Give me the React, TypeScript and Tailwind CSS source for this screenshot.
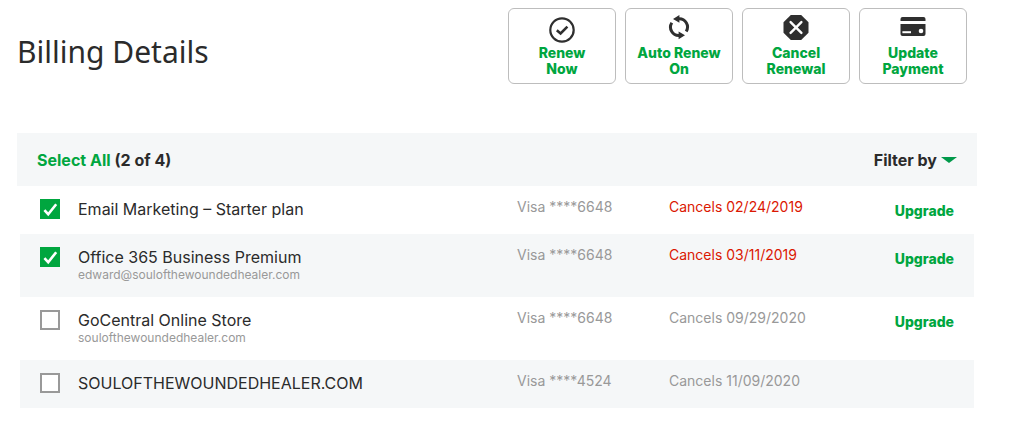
import { useState } from "react";

type Product = {
  id: string;
  name: string;
  detail?: string;
  card: string;
  date: string;
  expiring: boolean;
  upgrade: boolean;
};

const products: Product[] = [
  {
    id: "email",
    name: "Email Marketing – Starter plan",
    card: "Visa ****6648",
    date: "Cancels 02/24/2019",
    expiring: true,
    upgrade: true,
  },
  {
    id: "office",
    name: "Office 365 Business Premium",
    detail: "edward@soulofthewoundedhealer.com",
    card: "Visa ****6648",
    date: "Cancels 03/11/2019",
    expiring: true,
    upgrade: true,
  },
  {
    id: "store",
    name: "GoCentral Online Store",
    detail: "soulofthewoundedhealer.com",
    card: "Visa ****6648",
    date: "Cancels 09/29/2020",
    expiring: false,
    upgrade: true,
  },
  {
    id: "domain",
    name: "SOULOFTHEWOUNDEDHEALER.COM",
    card: "Visa ****4524",
    date: "Cancels 11/09/2020",
    expiring: false,
    upgrade: false,
  },
];

const RenewIcon = () => (
  <svg viewBox="0 0 28 28" className="size-7" fill="none" stroke="#2f2f2f" aria-hidden="true">
    <circle cx="14" cy="15" r="11.7" strokeWidth="2.2" />
    <path d="M8.8 15.2l3.8 3.2 6.8-6.8" strokeWidth="2.6" />
  </svg>
);

const AutoRenewIcon = () => (
  <svg viewBox="0 0 28 28" className="size-7" fill="none" stroke="#2f2f2f" aria-hidden="true">
    <path d="M13.5 3.8A8.3 8.3 0 0 1 21.2 16.5M14.5 20.4A8.3 8.3 0 0 1 6.8 7.7" strokeWidth="3" />
    <path d="M14.4 0v7.8L8 3.9zM13.6 24.2v-7.8l6.4 3.9z" fill="#2f2f2f" stroke="none" />
  </svg>
);

const CancelIcon = () => (
  <svg viewBox="0 0 28 28" className="size-7" fill="none" aria-hidden="true">
    <path d="M8.8 0h10.4l7.3 7.3v10.4L19.2 25H8.8L1.5 17.7V7.3z" fill="#2f2f2f" />
    <path d="M8.6 7.1l10.8 10.8M19.4 7.1L8.6 17.9" stroke="#fff" strokeWidth="2.4" strokeLinecap="round" />
  </svg>
);

const PaymentIcon = () => (
  <svg viewBox="0 0 28 28" className="size-7" fill="#2f2f2f" aria-hidden="true">
    <path d="M1.5 6V4a2 2 0 0 1 2-2h21a2 2 0 0 1 2 2v2z" />
    <path d="M1.5 9h25v10a2 2 0 0 1-2 2h-21a2 2 0 0 1-2-2z" />
    <path d="M3.4 16.2h8.6v2H3.4z" fill="#fff" />
    <circle cx="22" cy="16" r="2.3" fill="#fff" />
  </svg>
);

const actions = [
  { first: "Renew", second: "Now", icon: <RenewIcon /> },
  { first: "Auto Renew", second: "On", icon: <AutoRenewIcon /> },
  { first: "Cancel", second: "Renewal", icon: <CancelIcon /> },
  { first: "Update", second: "Payment", icon: <PaymentIcon /> },
];

const App = () => {
  const [selected, setSelected] = useState<string[]>(["email", "office"]);

  const toggle = (id: string) => {
    setSelected(
      selected.includes(id) ? selected.filter((item) => item !== id) : [...selected, id]
    );
  };

  return (
    <main className="bg-white pt-2 pr-[38px] pb-5 pl-[17px] font-['Inter',sans-serif] text-[#2b2b2b]">
      <header className="flex items-start justify-between pr-2.5">
        <h1 className="pt-6 font-['Noto_Sans',sans-serif] text-[30px] leading-10">Billing Details</h1>
        <div className="flex gap-[9px]">
          {actions.map((action) => (
            <button
              key={action.first}
              type="button"
              className="flex h-19 w-[108px] flex-col items-center rounded-md border border-[#bdbdbd] pt-1.5 text-[14px] leading-4 font-extrabold text-[#00a63f]"
            >
              {action.icon}
              <span className="pt-0.5">{action.first}</span>
              <span>{action.second}</span>
            </button>
          ))}
        </div>
      </header>

      <section className="pt-[49px]">
        <div className="flex h-[53px] items-center justify-between bg-[#f5f7f8] px-5">
          <div className="flex gap-1 text-base leading-5 font-bold">
            <button
              type="button"
              onClick={() => setSelected(products.map((product) => product.id))}
              className="text-[#00a63f]"
            >
              Select All
            </button>
            <span>({selected.length} of {products.length})</span>
          </div>
          <div className="flex items-center gap-1">
            <select
              aria-label="Filter by"
              className="field-sizing-content appearance-none bg-transparent text-base leading-5 font-bold"
            >
              <option>Filter by</option>
            </select>
            <svg viewBox="0 0 16 6" className="h-1.5 w-4" fill="#00994a" aria-hidden="true">
              <path d="M0 0h16L8 6z" />
            </svg>
          </div>
        </div>

        <div className="px-[3px]">
          <table className="w-full table-fixed text-left">
            <colgroup>
              <col className="w-[58px]" />
              <col />
              <col className="w-[152px]" />
              <col className="w-[180px]" />
              <col className="w-[125px]" />
            </colgroup>
            <tbody>
              {products.map((product) => (
                <tr key={product.id} className="h-12 align-top even:bg-[#f5f7f8]">
                  <td className="pt-[13px] pl-5">
                    <span className="grid size-5">
                      <input
                        type="checkbox"
                        id={product.id}
                        checked={selected.includes(product.id)}
                        onChange={() => toggle(product.id)}
                        className="peer col-start-1 row-start-1 size-5 appearance-none border-2 border-[#999] bg-white checked:border-[#00a63f] checked:bg-[#00a63f]"
                      />
                      <svg
                        viewBox="0 0 20 20"
                        className="pointer-events-none invisible col-start-1 row-start-1 size-5 peer-checked:visible"
                        fill="none"
                        stroke="#fff"
                        strokeWidth="2.6"
                        aria-hidden="true"
                      >
                        <path d="M4.4 11.2l3.8 4 8-10" />
                      </svg>
                    </span>
                  </td>
                  <td className="pt-[13px] pb-3.5">
                    <label htmlFor={product.id} className="block text-base leading-5">
                      {product.name}
                    </label>
                    {product.detail && (
                      <p className="text-[12px] leading-4 text-[#999]">{product.detail}</p>
                    )}
                  </td>
                  <td className="pt-[11px] text-[14px] leading-5 text-[#999]">{product.card}</td>
                  <td
                    className={
                      product.expiring
                        ? "pt-[11px] text-[14px] leading-5 text-[#db1802]"
                        : "pt-[11px] text-[14px] leading-5 text-[#999]"
                    }
                  >
                    {product.date}
                  </td>
                  <td className="pt-[15px] pr-5 text-right text-[14px] leading-5 font-extrabold text-[#00a63f]">
                    {product.upgrade && <a href="#upgrade">Upgrade</a>}
                  </td>
                </tr>
              ))}
            </tbody>
          </table>
        </div>
      </section>
    </main>
  );
};

export default App;
